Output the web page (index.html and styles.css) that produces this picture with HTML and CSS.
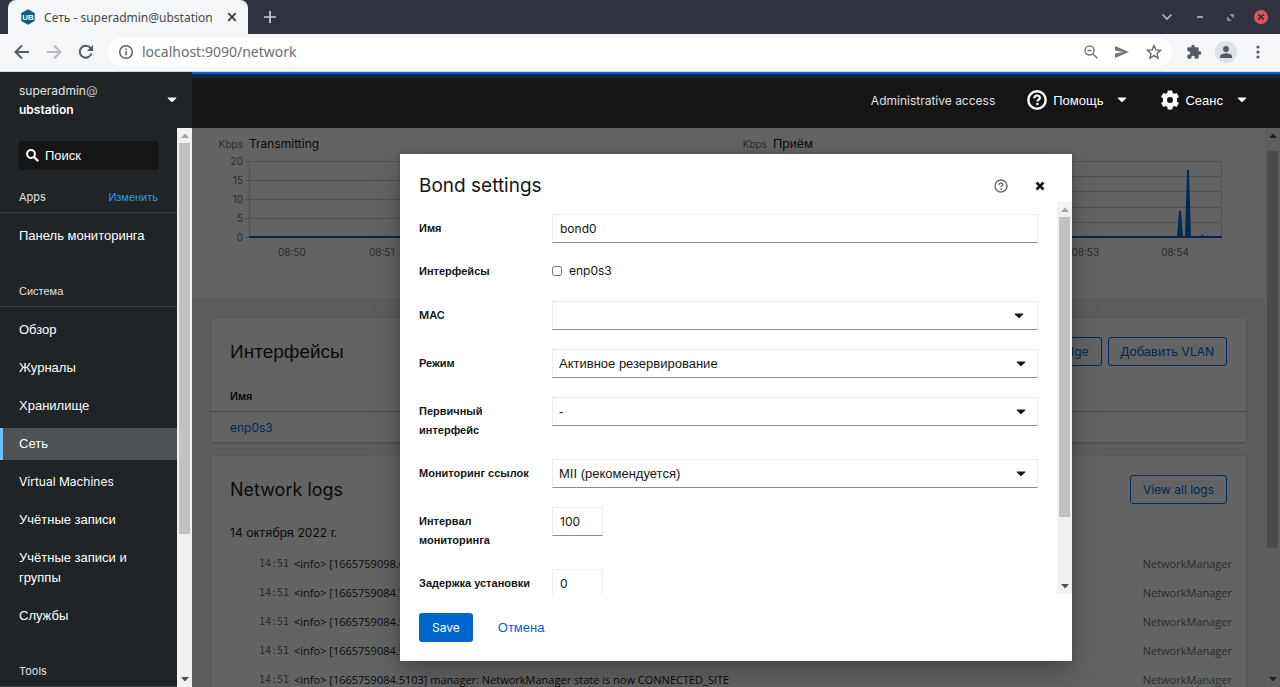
FILE: index.html
```html
<!DOCTYPE html>
<html lang="ru">
<head>
<meta charset="utf-8">
<title>Сеть - superadmin@ubstation</title>
<link rel="stylesheet" href="styles.css">
</head>
<body>
<svg class="defs" aria-hidden="true">
  <symbol id="caret" viewBox="0 0 10 6"><path d="M1 .5h8q.8 0 .3.7L5.6 4.800q-.6.600-1.200 0L.7 1.200Q.2.500 1 .500z" fill="currentColor"/></symbol>
  <symbol id="tri-up" viewBox="0 0 8 5"><path d="M0 5 4 .500 8 5z" fill="currentColor"/></symbol>
  <symbol id="tri-down" viewBox="0 0 8 5"><path d="M0 0 4 4.500 8 0z" fill="currentColor"/></symbol>
</svg>

<div class="tabstrip">
  <div class="tab">
    <svg class="tab-logo" viewBox="0 0 16 16"><path d="M8 .3 14.700 4v8L8 15.700 1.300 12V4z" fill="#145a86"/><text x="8" y="11" text-anchor="middle" font-family="Liberation Sans" font-weight="700" font-size="8" fill="#fff">UB</text></svg>
    <span class="tab-title">Сеть - superadmin@ubstation</span>
    <button class="bare" aria-label="Закрыть вкладку"><svg width="10" height="10" viewBox="0 0 10 10"><path d="M1.200 1.200l7.600 7.600m0-7.600L1.200 8.800" stroke="#3c4043" stroke-width="1.800"/></svg></button>
  </div>
  <button class="bare new-tab" aria-label="Новая вкладка"><svg width="12" height="12" viewBox="0 0 12 12"><path d="M6 0v12M0 6h12" stroke="#c9ccd6" stroke-width="1.700"/></svg></button>
  <div class="window-controls">
    <button class="bare" aria-label="Поиск вкладок"><svg width="12" height="8" viewBox="0 0 12 8"><path d="M1.500 1.500 6 6l4.500-4.500" fill="none" stroke="#b5bac4" stroke-width="1.700"/></svg></button>
    <button class="bare" aria-label="Свернуть"><svg width="6" height="2" viewBox="0 0 6 2"><path d="M0 1h6" stroke="#9a9fab" stroke-width="2"/></svg></button>
    <button class="bare" aria-label="Развернуть"><svg width="7" height="7" viewBox="0 0 7 7"><path d="M2.300 0H7v4.700zM0 2.300V7h4.700z" fill="#8a909c"/></svg></button>
    <button class="bare close-window" aria-label="Закрыть"><svg width="14" height="14" viewBox="0 0 14 14"><circle cx="7" cy="7" r="7" fill="#d9575b"/><path d="M4.300 4.300l5.400 5.400m0-5.400L4.300 9.700" stroke="#2f333f" stroke-width="1.800"/></svg></button>
  </div>
</div>

<div class="toolbar">
  <button class="bare" aria-label="Назад"><svg width="16" height="16" viewBox="0 0 16 16"><path d="M15 8H2M8 1.500 1.500 8 8 14.500" fill="none" stroke="#565a66" stroke-width="2"/></svg></button>
  <button class="bare" aria-label="Вперёд"><svg width="16" height="16" viewBox="0 0 16 16"><path d="M1 8h13M8 1.500 14.500 8 8 14.500" fill="none" stroke="#b9bbc0" stroke-width="2"/></svg></button>
  <button class="bare" aria-label="Обновить"><svg width="16" height="16" viewBox="0 0 16 16"><path d="M13.500 9.500A6 6 0 1 1 12.500 4L14 5.500" fill="none" stroke="#565a66" stroke-width="2"/><path d="M15 1v6H9z" fill="#565a66"/></svg></button>
  <div class="omnibox">
    <svg width="16" height="16" viewBox="0 0 16 16"><circle cx="8" cy="8" r="6.300" fill="none" stroke="#5f6368" stroke-width="1.500"/><path d="M8 7.200v4M8 4.500v1.600" stroke="#5f6368" stroke-width="1.600"/></svg>
    <input class="url" type="text" aria-label="Адрес" value="localhost:9090/network">
    <svg width="14" height="14" viewBox="0 0 14 14"><circle cx="5.500" cy="5.500" r="4.500" fill="none" stroke="#74777e" stroke-width="1.400"/><path d="M3.500 5.500h4M9 9l4.300 4.300" stroke="#74777e" stroke-width="1.500"/></svg>
    <svg width="14" height="14" viewBox="0 0 14 14"><path d="M0 1l14 6-14 6V8.500L8.500 7 0 5.500z" fill="#74777e"/></svg>
    <svg width="16" height="16" viewBox="0 0 16 16"><path d="M8 1.500l1.900 4.400 4.700.4-3.600 3.200 1.100 4.600L8 11.600l-4.100 2.500L5 9.500 1.400 6.300l4.700-.4z" fill="none" stroke="#5f6368" stroke-width="1.300"/></svg>
  </div>
  <button class="bare" aria-label="Расширения"><svg width="16" height="16" viewBox="0 0 24 24"><path d="M20.500 11H19V7a2 2 0 0 0-2-2h-4V3.500a2.500 2.500 0 0 0-5 0V5H4a2 2 0 0 0-2 2v3.800h1.500a2.700 2.700 0 0 1 0 5.400H2V20a2 2 0 0 0 2 2h3.800v-1.500a2.700 2.700 0 0 1 5.400 0V22H17a2 2 0 0 0 2-2v-4h1.500a2.500 2.500 0 0 0 0-5z" fill="#565a66"/></svg></button>
  <button class="bare avatar" aria-label="Профиль"><svg width="12" height="12" viewBox="0 0 12 12"><circle cx="6" cy="3" r="2.900" fill="#4f5969"/><path d="M0 12v-1.500C0 8 4 7.200 6 7.200s6 .8 6 3.300V12z" fill="#4f5969"/></svg></button>
  <button class="bare more" aria-label="Меню"><svg width="4" height="14" viewBox="0 0 4 14"><g fill="#565a66"><circle cx="2" cy="2" r="1.600"/><circle cx="2" cy="7" r="1.600"/><circle cx="2" cy="12" r="1.600"/></g></svg></button>
</div>

<div class="app">
  <aside class="sidebar">
    <button class="host">
      <span class="host-name lat"><span>superadmin<span class="at">@</span></span><b>ubstation</b></span>
      <svg class="caret"><use href="#caret"/></svg>
    </button>
    <div class="scroller">
      <nav class="nav">
        <label class="search">
          <svg width="13" height="13" viewBox="0 0 13 13"><circle cx="5" cy="5" r="3.900" fill="none" stroke="#fff" stroke-width="2"/><path d="M8 8l4.200 4.200" stroke="#fff" stroke-width="2.300"/></svg>
          <input type="text" placeholder="Поиск" aria-label="Поиск">
        </label>
        <div class="nav-title first"><span class="lat">Apps</span><a href="#">Изменить</a></div>
        <ul><li><a href="#">Панель мониторинга</a></li></ul>
        <div class="nav-title">Система</div>
        <ul>
          <li><a href="#">Обзор</a></li>
          <li><a href="#">Журналы</a></li>
          <li><a href="#">Хранилище</a></li>
          <li><a class="current" href="#">Сеть</a></li>
          <li><a class="lat" href="#">Virtual Machines</a></li>
          <li><a href="#">Учётные записи</a></li>
          <li><a href="#">Учётные записи и группы</a></li>
          <li><a href="#">Службы</a></li>
        </ul>
        <div class="nav-title lat">Tools</div>
      </nav>
      <div class="scrollbar nav-bar"><svg><use href="#tri-up"/></svg><i></i><svg class="dark"><use href="#tri-down"/></svg></div>
    </div>
  </aside>

  <div class="main">
    <header class="masthead">
      <button class="lat">Administrative access</button>
      <button class="menu"><svg width="20" height="20" viewBox="0 0 20 20"><circle cx="10" cy="10" r="8.700" fill="none" stroke="#fff" stroke-width="2.400"/><path d="M7.300 8.200c0-3.700 5.600-3.400 5.600-.4 0 1.900-2.400 1.900-2.400 3.800" fill="none" stroke="#fff" stroke-width="2.200"/><circle cx="10.400" cy="14" r="1.300" fill="#fff"/></svg><span>Помощь</span><svg class="caret"><use href="#caret"/></svg></button>
      <button class="menu"><svg width="18" height="20" viewBox="0 0 18 20"><path fill="#fff" fill-rule="evenodd" d="M6.800.5h4.400l.5 2.400 1.600.9 2.400-.8 2.200 3.800-1.900 1.700v2.900l1.900 1.700-2.200 3.800-2.400-.8-1.600.9-.5 2.500H6.800l-.5-2.500-1.600-.9-2.400.8L.100 13.100 2 11.400V8.500L.100 6.800 2.300 3l2.400.8 1.600-.9zM9 7a3 3 0 1 0 0 6 3 3 0 0 0 0-6z"/></svg><span>Сеанс</span><svg class="caret"><use href="#caret"/></svg></button>
    </header>

    <div class="frame">
      <div class="page">
        <section class="charts">
          <div class="chart">
            <span class="unit lat">Kbps</span><h2 class="lat">Transmitting</h2>
            <div class="yaxis lat"><span>20</span><span>15</span><span>10</span><span>5</span><span>0</span></div>
            <svg class="plot" viewBox="0 0 449 76" preserveAspectRatio="none">
              <path class="grid" d="M-4 .5h453M-4 19.500h453M-4 38.500h453M-4 57.500h453M-4 76.500h4M.5 0v76M448.500 0v76"/>
              <path class="line" d="M0 76h449"/>
            </svg>
            <div class="xaxis lat"><span>08:50</span><span>08:51</span><span>08:52</span><span>08:53</span><span>08:54</span></div>
          </div>
          <div class="chart">
            <span class="unit lat">Kbps</span><h2>Приём</h2>
            <div class="yaxis lat"></div>
            <svg class="plot" viewBox="0 0 449 76" preserveAspectRatio="none">
              <path class="grid" d="M-4 .5h453M-4 15.500h453M-4 30.500h453M-4 46.500h453M-4 61.500h453M.5 0v76M448.500 0v76"/>
              <path class="fill" d="M404 76l2-26h2l2 26zM412 76l2-67h2l2 67zM427 76l2-3 2 3zM433 76l2-2 2 2z"/>
              <path class="line" d="M0 76h449"/>
            </svg>
            <div class="xaxis lat"><span>08:50</span><span>08:51</span><span>08:52</span><span>08:53</span><span>08:54</span></div>
          </div>
        </section>

        <section class="card">
          <div class="card-head">
            <h1>Интерфейсы</h1>
            <div class="actions"><button class="outline">Добавить <span class="lat">bridge</span></button><button class="outline">Добавить <span class="lat">VLAN</span></button></div>
          </div>
          <table class="ifaces">
            <thead><tr><th>Имя</th></tr></thead>
            <tbody><tr><td><a class="lat" href="#">enp0s3</a></td></tr></tbody>
          </table>
        </section>

        <section class="card logs">
          <div class="card-head">
            <h1 class="lat">Network logs</h1>
            <div class="actions"><button class="outline lat">View all logs</button></div>
          </div>
          <h3><span class="lat">14</span> октября <span class="lat">2022</span> г.</h3>
          <ul class="log">
            <li><time>14:51</time><span>&lt;info&gt; [1665759098.6</span><em>NetworkManager</em></li>
            <li><time>14:51</time><span>&lt;info&gt; [1665759084.7</span><em>NetworkManager</em></li>
            <li><time>14:51</time><span>&lt;info&gt; [1665759084.5</span><em>NetworkManager</em></li>
            <li><time>14:51</time><span>&lt;info&gt; [1665759084.5</span><em>NetworkManager</em></li>
            <li><time>14:51</time><span>&lt;info&gt; [1665759084.5103] manager: NetworkManager state is now CONNECTED_SITE</span><em>NetworkManager</em></li>
          </ul>
        </section>
      </div>
      <div class="scrollbar page-bar"><svg class="dark"><use href="#tri-up"/></svg><i></i><svg class="dark"><use href="#tri-down"/></svg></div>

      <div class="backdrop">
        <div class="modal" role="dialog" aria-labelledby="dlg-title">
          <div class="modal-head">
            <h1 class="lat" id="dlg-title">Bond settings</h1>
            <button class="bare" aria-label="Справка"><svg width="14" height="14" viewBox="0 0 14 14"><circle cx="7" cy="7" r="6" fill="none" stroke="#6a6e73" stroke-width="1.500"/><path d="M5.100 5.900c0-2.500 3.800-2.300 3.800-.3 0 1.300-1.700 1.300-1.700 2.500" fill="none" stroke="#6a6e73" stroke-width="1.400"/><circle cx="7.200" cy="10" r=".9" fill="#6a6e73"/></svg></button>
            <button class="bare" aria-label="Закрыть"><svg width="10" height="10" viewBox="0 0 10 10"><path d="M1.500 1.500l7 7m0-7l-7 7" stroke="#151515" stroke-width="2.600"/></svg></button>
          </div>
          <div class="modal-scroll">
            <form class="form" id="bond">
              <label for="name">Имя</label>
              <input class="field lat" id="name" type="text" value="bond0">
              <span class="label tight">Интерфейсы</span>
              <label class="check lat"><input type="checkbox">enp0s3</label>
              <label class="lat" for="mac">MAC</label>
              <div class="pick combo"><input class="field lat" id="mac" type="text"><svg class="caret"><use href="#caret"/></svg></div>
              <label for="mode">Режим</label>
              <div class="pick"><select class="field" id="mode"><option>Активное резервирование</option></select><svg class="caret"><use href="#caret"/></svg></div>
              <label for="primary">Первичный интерфейс</label>
              <div class="pick"><select class="field" id="primary"><option>-</option></select><svg class="caret"><use href="#caret"/></svg></div>
              <label for="monitor">Мониторинг ссылок</label>
              <div class="pick"><select class="field" id="monitor"><option>MII (рекомендуется)</option></select><svg class="caret"><use href="#caret"/></svg></div>
              <label for="interval">Интервал мониторинга</label>
              <input class="field short lat" id="interval" type="text" value="100">
              <label for="delay">Задержка установки</label>
              <input class="field short lat" id="delay" type="text" value="0">
            </form>
            <div class="scrollbar modal-bar"><svg><use href="#tri-up"/></svg><i></i><svg class="dark"><use href="#tri-down"/></svg></div>
          </div>
          <div class="modal-foot"><button class="primary lat" form="bond" type="button">Save</button><button class="link">Отмена</button></div>
        </div>
      </div>
    </div>
  </div>
</div>
</body>
</html>
```
FILE: styles.css
```css
* { box-sizing: border-box; }
body {
  margin: 0;
  height: 100vh;
  display: flex;
  flex-direction: column;
  overflow: hidden;
  font: 13px/19px "Liberation Sans", sans-serif;
  color: #151515;
}
svg { display: block; flex: none; }
h1, h2, h3, ul { margin: 0; padding: 0; font-weight: 400; }
ul { list-style: none; }
a { color: #06c; text-decoration: none; }
button { font: inherit; color: inherit; background: none; border: 0; padding: 0; }
input, select { font: inherit; color: inherit; }
.lat { font-family: "Inter", "Liberation Sans", sans-serif; font-size: 12px; }
.defs { position: absolute; width: 0; height: 0; }
.bare { display: flex; }
.caret { width: 10px; height: 6px; }

/* browser window */
.tabstrip {
  flex: none;
  height: 34px;
  display: flex;
  align-items: center;
  padding: 0 12px 0 8px;
  background: #30333f;
  font: 12px/19px "Noto Sans", sans-serif;
}
.tab {
  width: 240px;
  height: 34px;
  display: flex;
  align-items: center;
  padding: 0 11px 0 12px;
  background: #f4f6f8;
  border-radius: 8px 8px 0 0;
  color: #45484d;
}
.tab-logo { width: 16px; height: 16px; margin-right: 8px; }
.tab-title { flex: 1; white-space: nowrap; }
.new-tab { margin-left: 16px; }
.window-controls { margin-left: auto; display: flex; align-items: center; gap: 24px; }
.close-window { margin-left: -4px; }
.toolbar {
  flex: none;
  height: 38px;
  display: flex;
  align-items: center;
  gap: 16px;
  padding: 0 20px 2px 14px;
  background: #f4f6f8;
  border-bottom: 1px solid #d5d9e0;
}
.omnibox {
  flex: 1;
  height: 28px;
  margin-left: -2px;
  margin-right: -2px;
  padding: 0 10px;
  display: flex;
  align-items: center;
  gap: 17px;
  background: #fff;
  border-radius: 14px;
}
.url {
  flex: 1;
  margin-left: -9px;
  padding: 0;
  border: 0;
  outline: 0;
  font: 14px/20px "Noto Sans", sans-serif;
  color: #6b6e73;
}
.avatar {
  width: 22px;
  height: 22px;
  margin: 0 -3px;
  align-items: center;
  justify-content: center;
  border-radius: 50%;
  background: #dde1e7;
}
.more { margin-left: 6px; }

/* application shell */
.app { flex: 1; min-height: 0; display: grid; grid-template-columns: 192px minmax(0, 1fr); }
.sidebar { min-height: 0; display: flex; flex-direction: column; background: #212427; color: #fff; }
.host {
  flex: none;
  height: 56px;
  display: flex;
  align-items: center;
  justify-content: space-between;
  padding: 0 15px 0 19px;
  text-align: left;
}
.host-name { display: grid; font-size: 12px; color: #e6e6e6; }
.host-name b { font-size: 12px; font-weight: 600; color: #fff; }
.at { color: #b8bbbe; }
.scroller { flex: 1; min-height: 0; display: flex; }
.nav { flex: 1; min-width: 0; overflow: hidden; padding-top: 13px; }
.search {
  display: flex;
  align-items: center;
  gap: 6px;
  height: 29px;
  margin: 0 19px;
  padding: 0 7px;
  background: #151515;
}
.search input { flex: 1; min-width: 0; padding: 0; border: 0; background: none; }
.search input::placeholder { color: #fff; opacity: 1; }
.nav-title {
  display: flex;
  justify-content: space-between;
  margin-top: 30px;
  padding: 0 19px 5px;
  border-bottom: 1px solid #3c3f42;
  font-size: 11px;
  color: #e0e0e0;
}
.nav-title.first { margin-top: 18px; }
.nav-title.lat, .nav-title .lat { font-size: 11px; }
.nav-title a { color: #2b9af3; }
.nav ul { display: grid; gap: 6px; padding-top: 7px; }
.nav li a { display: block; padding: 6px 19px; line-height: 20px; color: #fff; }
.nav li a.current { padding-left: 16px; border-left: 3px solid #73bcf7; background: #4f5255; }

.scrollbar {
  flex: none;
  width: 15px;
  display: grid;
  grid-template-rows: 15px minmax(0, 1fr) 15px;
  place-items: center;
  background: #f1f1f1;
  color: #a3a3a3;
}
.scrollbar svg { width: 8px; height: 5px; }
.scrollbar .dark { color: #505050; }
.scrollbar i { align-self: start; width: 11px; background: #c1c1c1; }
.nav-bar i { height: 74%; }
.page-bar i { height: 75%; margin-top: 8px; }
.modal-bar i { height: 83%; }

.main { min-width: 0; min-height: 0; display: flex; flex-direction: column; }
.masthead {
  flex: none;
  height: 56px;
  display: flex;
  align-items: center;
  justify-content: flex-end;
  gap: 34px;
  padding-right: 33px;
  background: linear-gradient(#06c 0 2px, #102c4c 2px, #151515 9px);
  color: #fff;
}
.masthead .lat { margin-right: -2px; color: #e0e0e0; }
.menu { display: flex; align-items: center; gap: 6px; }
.menu .caret { margin-left: 8px; }

.frame { position: relative; flex: 1; min-height: 0; display: flex; background: #f0f0f0; }
.page { flex: 1; min-width: 0; overflow: hidden; }
.charts {
  display: grid;
  grid-template-columns: 1fr 1fr;
  gap: 13px;
  padding: 6px 19px 38px;
  background: #fff;
}
.chart {
  display: grid;
  grid-template-columns: 32px minmax(0, 1fr);
  grid-template-rows: 20px 89px 17px;
  column-gap: 6px;
  padding-right: 24px;
  color: #6a6e73;
}
.chart h2 { font-size: 13px; line-height: 20px; color: #151515; }
.chart h2.lat { font-size: 12px; }
.chart .unit, .yaxis, .xaxis { font-size: 10px; }
.unit { text-align: right; line-height: 20px; }
.yaxis {
  display: flex;
  flex-direction: column;
  justify-content: space-between;
  padding-top: 1px;
  text-align: right;
  line-height: 12px;
}
.plot { width: 100%; height: 76px; margin-top: 7px; overflow: visible; }
.plot path { vector-effect: non-scaling-stroke; }
.plot .grid { fill: none; stroke: #d2d2d2; }
.plot .line { fill: none; stroke: #06c; stroke-width: 2; }
.plot .fill { fill: #06c; }
.xaxis {
  grid-column: 2;
  display: grid;
  grid-template-columns: repeat(5, 1fr);
  margin: 0 2px 0 -2px;
  text-align: center;
}

.card {
  margin: 20px 19px 0;
  background: #fff;
  box-shadow: 0 1px 2px rgba(3, 3, 3, .2), 0 0 2px rgba(3, 3, 3, .1);
}
.card-head { display: flex; align-items: center; justify-content: space-between; padding: 19px 19px 0; }
.card-head h1 { font-size: 19px; line-height: 29px; }
.card-head h1.lat { font-size: 18px; }
.actions { display: flex; gap: 6px; }
.outline { padding: 5px 12px; border: 1px solid #06c; border-radius: 3px; line-height: 17px; color: #06c; }
.ifaces { width: 100%; margin-top: 20px; border-collapse: collapse; text-align: left; }
.ifaces th { padding: 1px 19px 5px; font-size: 11px; border-bottom: 1px solid #b8bbbe; }
.ifaces td { padding: 6px 19px 5px; }
.logs { margin-top: 14px; }
.logs h3 { margin-top: 19px; padding: 0 19px; font-size: 13px; }
.log { padding: 12px 14px 0 48px; }
.log li {
  display: flex;
  height: 29px;
  align-items: flex-start;
  font: 11px/19px "Open Sans", sans-serif;
  white-space: nowrap;
}
.log time { width: 35px; font: 10px/19px "DejaVu Sans Mono", monospace; color: #6a6e73; }
.log em { margin-left: auto; font-style: normal; color: #6a6e73; }

/* dialog */
.backdrop {
  position: absolute;
  inset: 0;
  display: flex;
  align-items: center;
  justify-content: center;
  background: rgba(3, 3, 3, .62);
}
.modal {
  width: 672px;
  max-width: 100%;
  max-height: calc(100% - 52px);
  display: flex;
  flex-direction: column;
  background: #fff;
  box-shadow: 0 13px 26px rgba(3, 3, 3, .25), 0 0 6px rgba(3, 3, 3, .2);
}
.modal-head { flex: none; display: flex; align-items: center; padding: 19px 27px 4px 19px; gap: 27px; }
.modal-head h1 { flex: 1; font-size: 19px; line-height: 25px; }
.modal-scroll { flex: 1; min-height: 0; display: flex; overflow: hidden; }
.form {
  flex: 1;
  min-width: 0;
  display: grid;
  grid-template-columns: 114px minmax(0, 1fr);
  gap: 19px;
  align-items: start;
  align-content: start;
  padding: 12px 19px 19px;
}
.form > label, .label { padding-top: 5px; font-size: 11px; font-weight: 700; white-space: normal; }
.form > .tight { padding-top: 0; }
.form > label.lat { font-weight: 600; }
.form > label.check {
  display: flex;
  align-items: center;
  gap: 7px;
  height: 17px;
  margin-bottom: 3px;
  padding: 0;
  font-size: 12px;
  font-weight: 400;
}
.check input { width: 10px; height: 10px; margin: 0; }
.field {
  width: 100%;
  height: 29px;
  padding: 4px 7px;
  border: 1px solid #ededed;
  border-bottom-color: #8a8d90;
  border-radius: 0;
  background: #fff;
  appearance: none;
  outline: 0;
}
select.field { padding-left: 6px; }
.form .short { width: 51px; }
.pick { position: relative; }
.pick .caret { position: absolute; right: 12px; top: 12px; pointer-events: none; }
.combo .caret { right: 14px; }
.modal-foot { flex: none; display: flex; gap: 25px; padding: 19px; }
.primary { padding: 5px 13px; border-radius: 3px; background: #06c; color: #fff; }
.link { color: #06c; }
```
